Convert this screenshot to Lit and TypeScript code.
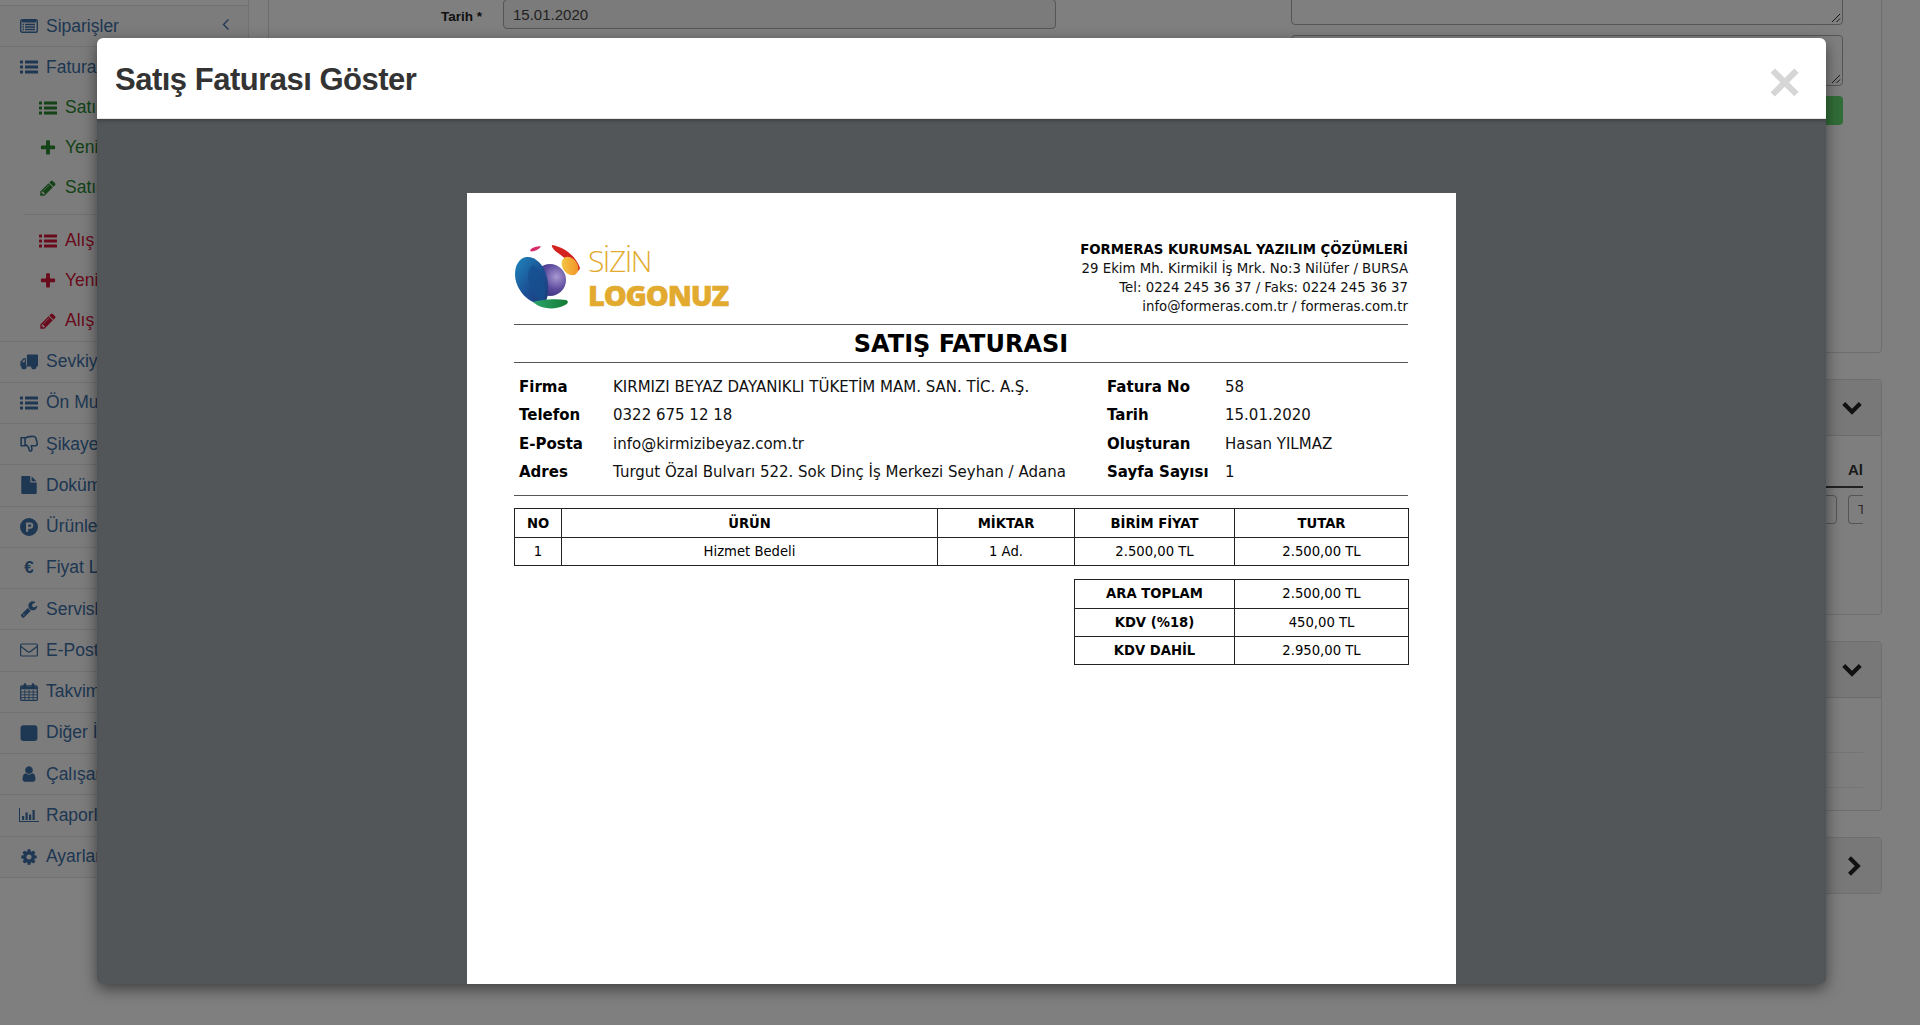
import { LitElement, html, css, svg } from "lit";
import { customElement } from "lit/decorators.js";

const FA: Record<string, string> = {
  plus: "M1600 736v192q0 40-28 68t-68 28h-416v416q0 40-28 68t-68 28h-192q-40 0-68-28t-28-68v-416h-416q-40 0-68-28t-28-68v-192q0-40 28-68t68-28h416v-416q0-40 28-68t68-28h192q40 0 68 28t28 68v416h416q40 0 68 28t28 68z",
  pencil: "M491 1536l91-91-235-235-91 91v107h128v128h107zm523-928q0-22-22-22-10 0-17 7l-542 542q-7 7-7 17 0 22 22 22 10 0 17-7l542-542q7-7 7-17zm-54-192l416 416-832 832h-416v-416zm683 96q0 53-37 90l-166 166-416-416 166-165q36-38 90-38 53 0 91 38l235 234q37 39 37 91z",
  cog: "M1152 896q0-106-75-181t-181-75-181 75-75 181 75 181 181 75 181-75 75-181zm512-109v222q0 12-8 23t-20 13l-185 28q-19 54-39 91 35 50 107 138 10 12 10 25t-9 23q-27 37-99 108t-94 71q-12 0-26-9l-138-108q-44 23-91 38-16 136-29 186-7 28-36 28h-222q-14 0-24.500-8.500t-11.500-21.500l-28-184q-49-16-90-37l-141 107q-10 9-25 9-14 0-25-11-126-114-165-168-7-10-7-23 0-12 8-23 15-21 51-66.500t54-70.500q-27-50-41-99l-183-27q-13-2-21-12.500t-8-23.500v-222q0-12 8-23t19-13l186-28q14-46 39-92-40-57-107-138-10-12-10-24 0-10 9-23 26-36 98.500-107.500t94.500-71.500q13 0 26 10l138 107q44-23 91-38 16-136 29-186 7-28 36-28h222q14 0 24.500 8.500t11.500 21.500l28 184q49 16 90 37l142-107q9-9 24-9 13 0 25 10 129 119 165 170 7 8 7 22 0 12-8 23-15 21-51 66.500t-54 70.500q26 50 41 98l183 28q13 2 21 12.500t8 23.500z",
  user: "M1536 1399q0 109-62.500 187t-150.500 78h-854q-88 0-150.500-78t-62.500-187q0-85 8.500-160.500t31.500-152 58.500-131 94-89 134.500-34.500q131 128 313 128t313-128q76 0 134.500 34.500t94 89 58.500 131 31.500 152 8.500 160.500zm-256-887q0 159-112.500 271.500t-271.500 112.500-271.500-112.500-112.500-271.500 112.500-271.500 271.500-112.500 271.500 112.500 112.500 271.500z",
  wrench: "M448 1472q0-26-19-45t-45-19-45 19-19 45 19 45 45 19 45-19 19-45zm644-420l-682 682q-37 37-90 37-52 0-91-37l-106-108q-38-36-38-90 0-53 38-91l681-681q39 98 114.500 173.500t173.500 114.500zm634-435q0 39-23 106-47 134-164.500 217.500t-258.500 83.500q-185 0-316.500-131.500t-131.500-316.500 131.500-316.500 316.500-131.500q58 0 121.500 16.500t107.500 46.500q16 11 16 28t-16 28l-293 169v224l193 107q5-3 79-48.500t135.500-81 70.500-35.500q15 0 23.500 10t8.500 25z",
  file: "M1152 512v-472q22 14 36 28l408 408q14 14 28 36h-472zm-128 32q0 40 28 68t68 28h544v1056q0 40-28 68t-68 28h-1344q-40 0-68-28t-28-68v-1600q0-40 28-68t68-28h800v544z",
};

const faIcon = (name: string) => svg`<svg class="ico" viewBox="0 0 1792 1792" fill="currentColor"><path d=${FA[name]} /></svg>`;

const icons: Record<string, () => unknown> = {
  plus: () => faIcon("plus"),
  pencil: () => faIcon("pencil"),
  cog: () => faIcon("cog"),
  user: () => faIcon("user"),
  wrench: () => faIcon("wrench"),
  file: () => faIcon("file"),
  list: () => svg`<svg class="ico" viewBox="0 0 18 14" fill="currentColor">
    <rect x="0" y="0.5" width="3" height="3" rx=".6"/><rect x="0" y="5.5" width="3" height="3" rx=".6"/><rect x="0" y="10.500" width="3" height="3" rx=".6"/>
    <rect x="5" y="0.5" width="13" height="3" rx=".5"/><rect x="5" y="5.500" width="13" height="3" rx=".5"/><rect x="5" y="10.500" width="13" height="3" rx=".5"/></svg>`,
  listalt: () => svg`<svg class="ico" viewBox="0 0 18 14" fill="none" stroke="currentColor">
    <rect x=".7" y=".7" width="16.600" height="12.600" rx="1.500" stroke-width="1.400"/>
    <path d="M2 1h14v2.500H2z" fill="currentColor" stroke="none"/>
    <path d="M5 5.500h10M5 8h10M5 10.500h10M2.500 5.500h1.500M2.500 8h1.500M2.500 10.500h1.500" stroke-width="1.300"/></svg>`,
  truck: () => svg`<svg class="ico" viewBox="0 0 17 14" fill="currentColor">
    <path d="M6.500 1c0-.5.4-1 1-1h8.500c.5 0 1 .5 1 1v9.500c0 .4-.3.700-.7.700H6.500z"/>
    <path d="M5.600 3.500H3.400L.4 6.700V11h5.200zM4.500 4.600v2.600H1.900l2-2.600z" fill-rule="evenodd"/>
    <circle cx="3.800" cy="11.400" r="2.500"/><circle cx="13" cy="11.400" r="2.500"/></svg>`,
  thumb: () => svg`<svg class="ico" viewBox="0 0 16 16" fill="none" stroke="currentColor" stroke-width="1.400" stroke-linejoin="round">
    <path d="M1 2.500h3.500v7H1zM4.500 3c2-1.800 4.500-2 8-1.700 1.200.2 1.700 1 1.800 2l1 4.200c.2 1.300-.6 2-1.700 2H10l.6 3c.1 1.300-.8 2-1.800 1.800-.7-.3-.8-2.200-1.300-3.300-.7-1.200-1.800-2-3-2.800"/></svg>`,
  ph: () => svg`<svg class="ico" viewBox="0 0 18 18" fill="currentColor"><path fill-rule="evenodd" d="M9 0a9 9 0 1 0 0 18A9 9 0 0 0 9 0zM6 4.500h4.200a3 3 0 0 1 0 6.200H8.200v3H6zM8.200 6.500v2.300h2a1.100 1.100 0 0 0 0-2.300z"/></svg>`,
  envelope: () => svg`<svg class="ico" viewBox="0 0 18 14" fill="none" stroke="currentColor" stroke-width="1.200"><rect x=".6" y="1" width="16.800" height="12" rx="1.300"/><path d="M1 3.500l6.500 5c1 .8 2 .8 3 0l6.500-5"/></svg>`,
  calendar: () => svg`<svg class="ico" viewBox="0 0 16 16" fill="none" stroke="currentColor"><rect x=".6" y="2.500" width="14.800" height="13" rx="1" stroke-width="1.100"/>
    <path d="M1 3h14v2.600H1z" fill="currentColor" stroke="none"/><rect x="3.500" y=".4" width="1.800" height="3.400" rx=".5" fill="currentColor" stroke-width=".4"/><rect x="10.700" y=".4" width="1.800" height="3.400" rx=".5" fill="currentColor" stroke-width=".4"/>
    <path d="M1 8h14M1 10.500h14M1 13h14M4.300 6v9M8 6v9M11.700 6v9" stroke-width=".8"/></svg>`,
  stop: () => svg`<svg class="ico" viewBox="0 0 16 16" fill="currentColor"><rect x=".5" y="1" width="15" height="14" rx="2.600"/></svg>`,
  chart: () => svg`<svg class="ico wide" viewBox="0 0 20 14" fill="currentColor"><path d="M0 0h1v13h19v1H0z"/><rect x="3" y="8" width="2.200" height="4"/><rect x="6.500" y="4.500" width="2.200" height="7.500"/><rect x="10" y="6.500" width="2.200" height="5.500"/><rect x="13.500" y="2" width="2.200" height="10"/></svg>`,
};

const chevron = (d: string) => svg`<svg class="chev" viewBox="0 0 16 16" fill="none" stroke="currentColor" stroke-width="2.800"><path d=${d} /></svg>`;

interface Item {
  icon: string;
  label: string;
  tone?: string;
}

const topItems: Item[] = [{ icon: "listalt", label: "Siparişler" }, { icon: "list", label: "Faturalar" }];
const salesItems: Item[] = [
  { icon: "list", label: "Satış Faturaları", tone: "green" },
  { icon: "plus", label: "Yeni Satış Faturası", tone: "green" },
  { icon: "pencil", label: "Satış Taslakları", tone: "green" },
];
const buyItems: Item[] = [
  { icon: "list", label: "Alış Faturaları", tone: "red" },
  { icon: "plus", label: "Yeni Alış Faturası", tone: "red" },
  { icon: "pencil", label: "Alış Taslakları", tone: "red" },
];
const lowerItems: Item[] = [
  { icon: "truck", label: "Sevkiyat" },
  { icon: "list", label: "Ön Muhasebe" },
  { icon: "thumb", label: "Şikayetler" },
  { icon: "file", label: "Dokümanlar" },
  { icon: "ph", label: "Ürünler" },
  { icon: "euro", label: "Fiyat Listeleri" },
  { icon: "wrench", label: "Servisler" },
  { icon: "envelope", label: "E-Posta" },
  { icon: "calendar", label: "Takvim" },
  { icon: "stop", label: "Diğer İşlemler" },
  { icon: "user", label: "Çalışanlar" },
  { icon: "chart", label: "Raporlar" },
  { icon: "cog", label: "Ayarlar" },
];

const resizer = svg`<svg class="grip" viewBox="0 0 10 10" fill="none" stroke="#333" stroke-width="1"><path d="M1 9l8-8M5.500 9L9 5.500" /></svg>`;

@customElement("app-root")
export class AppRoot extends LitElement {
  static styles = css`
    :host {
      display: block;
      position: relative;
      height: 1025px;
      overflow: hidden;
      background: #fff;
      font-family: "Liberation Sans", Arial, sans-serif;
    }
    .page {
      display: flex;
      height: 1025px;
    }
    .sidebar {
      width: 248px;
      flex: none;
      align-self: flex-start;
      padding-top: 5px;
      border-right: 1px solid #e4e4e4;
    }
    .row {
      display: flex;
      align-items: center;
      height: 41.25px;
      padding-left: 20px;
      gap: 8px;
      font-size: 17.5px;
      color: #3c6ea5;
      border-top: 1px solid #e2e2e2;
      background: #f8f8f8;
      box-sizing: border-box;
      position: relative;
      white-space: nowrap;
    }
    .row.last {
      border-bottom: 1px solid #e2e2e2;
      height: 42px;
    }
    .group {
      background: #f8f8f8;
    }
    .sub {
      display: flex;
      align-items: center;
      height: 40px;
      padding-left: 39px;
      gap: 8px;
      font-size: 17.5px;
      white-space: nowrap;
    }
    .green { color: #27862f; }
    .red { color: #d4143a; }
    .divider {
      height: 1px;
      margin: 6px 0 6px 24px;
      background: #e2e2e2;
    }
    .ico {
      width: 18px;
      height: 18px;
      flex: none;
    }
    .ico.wide { width: 20px; margin-left: -1px; margin-right: -1px; }
    .euro {
      width: 18px;
      flex: none;
      text-align: center;
      font-weight: 700;
      font-size: 17px;
    }
    .back {
      position: absolute;
      left: 221px;
      top: 12px;
      width: 10px;
      height: 13px;
    }
    .content {
      margin-left: 19px;
      width: 1614px;
      flex: none;
      display: flex;
      flex-direction: column;
    }
    .panel {
      border: 1px solid #dcdcdc;
      border-radius: 4px;
      background: #fdfdfd;
      box-sizing: border-box;
    }
    .form {
      height: 353px;
      border-top: 0;
      border-radius: 0 0 4px 4px;
      background: #ffffff;
      display: flex;
      padding-right: 38px;
    }
    .form-left {
      width: 1022px;
      flex: none;
      box-sizing: border-box;
      display: flex;
      padding-left: 172px;
      gap: 21px;
      color: #222;
    }
    .form-left label {
      font-size: 13.5px;
      font-weight: 700;
      margin-top: 9px;
      white-space: nowrap;
    }
    .date {
      width: 553px;
      height: 30px;
      margin-top: -1px;
      border: 1px solid #aaa;
      border-radius: 4px;
      box-sizing: border-box;
      padding: 6px 9px;
      font-size: 15px;
      color: #444;
      background: #f6f6f6;
    }
    .form-right {
      flex: 1;
      display: flex;
      flex-direction: column;
    }
    .area {
      position: relative;
      border: 1px solid #aaa;
      border-radius: 4px;
      box-sizing: border-box;
      height: 51px;
      margin-bottom: 10px;
    }
    .area.first {
      height: 35px;
      margin-top: -10px;
    }
    .grip {
      position: absolute;
      right: 1px;
      bottom: 1px;
      width: 10px;
      height: 10px;
    }
    .save {
      align-self: flex-end;
      width: 120px;
      height: 29px;
      background: #62dc70;
      border-radius: 4px;
    }
    .card {
      margin-top: 26px;
      overflow: hidden;
    }
    .card-head {
      display: flex;
      align-items: center;
      justify-content: flex-end;
      padding-right: 17px;
      background: #f0f0f0;
      border-bottom: 1px solid #d8d8d8;
      color: #222;
    }
    .chev {
      width: 24px;
      height: 24px;
    }
    .tall { height: 55px; }
    .card.one { height: 236px; }
    .card.two { height: 170px; }
    .card.three { height: 57px; }
    .card.three .card-head { height: 55px; border: 0; padding-right: 15px; }
    .tabs {
      padding: 25px 18px 0 0;
    }
    .tab-title {
      text-align: right;
      font-size: 15px;
      font-weight: 700;
      color: #333;
      height: 25px;
      border-bottom: 2px solid #444;
    }
    .boxes {
      display: flex;
      gap: 11px;
      margin-top: 7px;
      justify-content: flex-end;
    }
    .box {
      width: 60px;
      height: 29px;
      flex: none;
      border: 1px solid #aaa;
      border-radius: 4px;
      box-sizing: border-box;
    }
    .box.clip {
      width: 15px;
      border-right: 0;
      border-radius: 4px 0 0 4px;
      font-size: 13px;
      color: #555;
      padding: 6px 0 0 9px;
      overflow: hidden;
    }
    .rules {
      margin: 20px 18px 0 0;
    }
    .rules div {
      height: 34px;
      border-bottom: 1px solid #eaeaea;
    }
    .scrim {
      position: absolute;
      inset: 0;
      background: rgba(0, 0, 0, 0.5);
    }
    .modal {
      position: absolute;
      left: 97px;
      top: 38px;
      width: 1729px;
      height: 946px;
      border-radius: 6px;
      overflow: hidden;
      box-shadow: 0 5px 15px rgba(0, 0, 0, 0.5);
      display: flex;
      flex-direction: column;
      background: #525659;
    }
    .modal-head {
      height: 81px;
      flex: none;
      background: #fff;
      border-bottom: 1px solid #e5e5e5;
      box-sizing: border-box;
      padding: 0 18px;
      display: flex;
      align-items: center;
      justify-content: space-between;
      color: #333;
    }
    h3 {
      margin: 4px 0 0;
      font-size: 31px;
      font-weight: 700;
      letter-spacing: -0.5px;
      line-height: 1.1;
    }
    .close {
      font-size: 56px;
      font-weight: 700;
      line-height: 1;
      color: #d6d6d6;
      margin: 8px 7px 0 0;
    }
    .modal-body {
      flex: 1;
      display: flex;
      justify-content: center;
      padding-top: 74px;
      overflow: hidden;
      box-shadow: inset 0 4px 4px -3px rgba(0, 0, 0, 0.35);
    }
    .sheet {
      width: 989px;
      height: 791px;
      flex: none;
      background: #fff;
      box-sizing: border-box;
      padding: 47px 48px 0 47px;
      color: #000;
      font-family: "DejaVu Sans", sans-serif;
    }
    .sheet-head {
      display: flex;
      justify-content: space-between;
      height: 86px;
      border-bottom: 1px solid #555;
      box-sizing: border-box;
      margin-top: -1px;
      padding-top: 1px;
    }
    .logo {
      display: flex;
      align-items: flex-start;
      margin-top: 2px;
    }
    .logo svg {
      width: 68px;
      height: 68px;
      flex: none;
    }
    .logo-text {
      margin-left: 6px;
      color: #e2aa2e;
      font-family: "Open Sans", sans-serif;
      display: flex;
      flex-direction: column;
    }
    .sizin {
      font-size: 30px;
      font-weight: 300;
      line-height: 32px;
      letter-spacing: -1.5px;
      height: 35px;
      margin-top: 3px;
    }
    .logonuz {
      font-size: 29px;
      font-weight: 800;
      line-height: 30px;
      letter-spacing: -1.2px;
      -webkit-text-stroke: 0.5px #e2aa2e;
    }
    .company {
      text-align: right;
      font-size: 13.3px;
      line-height: 19px;
      color: #111;
    }
    .company b {
      color: #000;
    }
    h1 {
      margin: 0;
      height: 38px;
      line-height: 38px;
      text-align: center;
      font-size: 24px;
      font-weight: 700;
      border-bottom: 1px solid #555;
      box-sizing: border-box;
    }
    .info {
      display: grid;
      grid-template-columns: 94px 494px 118px 1fr;
      grid-auto-rows: 28.33px;
      align-items: center;
      margin-top: 10px;
      padding: 0 0 9px 5px;
      border-bottom: 1px solid #555;
      font-size: 15px;
      color: #111;
      white-space: nowrap;
    }
    .info b {
      color: #000;
    }
    table {
      border-collapse: collapse;
      table-layout: fixed;
      font-size: 13.2px;
      text-align: center;
    }
    td, th {
      border: 1px solid #222;
      padding: 0;
      height: 27.5px;
    }
    .items {
      width: 895px;
      margin-top: 12px;
    }
    .totals {
      width: 335px;
      margin: 13px -1px 0 auto;
    }
    .totals td, .totals th {
      height: 27.2px;
    }
    .c-no { width: 47px; }
    .c-name { width: 376px; }
    .c-qty { width: 137px; }
    .c-price { width: 160px; }
    .c-total { width: 174px; }
  `;

  navRow(item: Item, cls = "row") {
    return html`<div class=${cls}>
      ${item.icon === "euro" ? html`<span class="euro">€</span>` : icons[item.icon]()}
      <span>${item.label}</span>
    </div>`;
  }

  subRow(item: Item) {
    return html`<div class="sub ${item.tone}">${icons[item.icon]()}<span>${item.label}</span></div>`;
  }

  logo() {
    return svg`<svg viewBox="0 0 68 68">
      <defs>
        <linearGradient id="blue" x1="0" y1="0" x2="1" y2="1"><stop offset="0" stop-color="#1f86bd"/><stop offset=".55" stop-color="#1b4f93"/><stop offset="1" stop-color="#1f3a78"/></linearGradient>
        <radialGradient id="violet" cx=".7" cy=".4" r=".8"><stop offset="0" stop-color="#a999d2"/><stop offset=".5" stop-color="#5b4a9c"/><stop offset="1" stop-color="#2c2a72"/></radialGradient>
        <linearGradient id="sun" x1="0" y1="0" x2="1" y2="1"><stop offset="0" stop-color="#f6d04a"/><stop offset="1" stop-color="#ef8a22"/></linearGradient>
        <linearGradient id="leaf" x1="0" y1="0" x2="1" y2="0"><stop offset="0" stop-color="#2ba56a"/><stop offset="1" stop-color="#157a35"/></linearGradient>
      </defs>
      <path d="M17 7c3-2 7-3 10-2.500-2 3-6 4.500-9.500 5-1.500.2-1.500-1.500-.5-2.500z" fill="#d72b6c"/>
      <path d="M38 3C50 5 62 14 66 26 65 30 62 30 60 27 58 22 50 15 44 11 41 9 37 5 38 3z" fill="#d3221f"/>
      <ellipse cx="56" cy="24" rx="7.500" ry="10" transform="rotate(-35 56 24)" fill="url(#sun)"/>
      <circle cx="36" cy="38" r="16" fill="url(#violet)"/>
      <path d="M12 15c9-1 17 7 20 17 3 10 3 20 0 27-1 2-3 3-6 3C12 60 1 46 1 32 1 24 5 16 12 15z" fill="url(#blue)"/>
      <path d="M19 23c7 4 12 15 12 25 0 6-1 9-3 11-8-5-14-14-14-24 0-6 2-10 5-12z" fill="#174f8f" opacity=".8"/>
      <path d="M19 60c6-2 21-4 33-2 3 1 2 4-1 5-9 5-23 5-32-3z" fill="url(#leaf)"/>
    </svg>`;
  }

  render() {
    return html`
      <div class="page">
        <nav class="sidebar">
          <div class="row">
            ${icons.listalt()}<span>${topItems[0].label}</span>
            <svg class="back" viewBox="0 0 10 13" fill="none" stroke="currentColor" stroke-width="1.300"><path d="M7.500 1.500L2.500 6.500l5 5" /></svg>
          </div>
          <div class="group">
            ${this.navRow(topItems[1])}
            ${salesItems.map((i) => this.subRow(i))}
            <div class="divider"></div>
            ${buyItems.map((i) => this.subRow(i))}
          </div>
          ${lowerItems.map((i, n) => this.navRow(i, n === lowerItems.length - 1 ? "row last" : "row"))}
        </nav>
        <main class="content">
          <section class="panel form">
            <div class="form-left">
              <label>Tarih *</label>
              <div class="date">15.01.2020</div>
            </div>
            <div class="form-right">
              <div class="area first">${resizer}</div>
              <div class="area">${resizer}</div>
              <div class="save"></div>
            </div>
          </section>
          <section class="panel card one">
            <div class="card-head tall">${chevron("M2.500 5l5.500 5.500L13.500 5")}</div>
            <div class="tabs">
              <div class="tab-title">Al</div>
              <div class="boxes"><div class="box"></div><div class="box clip">T</div></div>
            </div>
          </section>
          <section class="panel card two">
            <div class="card-head tall">${chevron("M2.500 5l5.500 5.500L13.500 5")}</div>
            <div class="rules"><div></div><div></div></div>
          </section>
          <section class="panel card three">
            <div class="card-head">${chevron("M5 2.500L10.500 8 5 13.500")}</div>
          </section>
        </main>
      </div>
      <div class="scrim"></div>
      <div class="modal">
        <header class="modal-head">
          <h3>Satış Faturası Göster</h3>
          <span class="close">×</span>
        </header>
        <div class="modal-body">
          <article class="sheet">
            <div class="sheet-head">
              <div class="logo">
                ${this.logo()}
                <div class="logo-text"><span class="sizin">SİZİN</span><span class="logonuz">LOGONUZ</span></div>
              </div>
              <div class="company">
                <b>FORMERAS KURUMSAL YAZILIM ÇÖZÜMLERİ</b><br />
                29 Ekim Mh. Kirmikil İş Mrk. No:3 Nilüfer / BURSA<br />
                Tel: 0224 245 36 37 / Faks: 0224 245 36 37<br />
                info@formeras.com.tr / formeras.com.tr
              </div>
            </div>
            <h1>SATIŞ FATURASI</h1>
            <div class="info">
              <b>Firma</b><span>KIRMIZI BEYAZ DAYANIKLI TÜKETİM MAM. SAN. TİC. A.Ş.</span><b>Fatura No</b><span>58</span>
              <b>Telefon</b><span>0322 675 12 18</span><b>Tarih</b><span>15.01.2020</span>
              <b>E-Posta</b><span>info@kirmizibeyaz.com.tr</span><b>Oluşturan</b><span>Hasan YILMAZ</span>
              <b>Adres</b><span>Turgut Özal Bulvarı 522. Sok Dinç İş Merkezi Seyhan / Adana</span><b>Sayfa Sayısı</b><span>1</span>
            </div>
            <table class="items">
              <colgroup><col class="c-no" /><col class="c-name" /><col class="c-qty" /><col class="c-price" /><col class="c-total" /></colgroup>
              <tr><th>NO</th><th>ÜRÜN</th><th>MİKTAR</th><th>BİRİM FİYAT</th><th>TUTAR</th></tr>
              <tr><td>1</td><td>Hizmet Bedeli</td><td>1 Ad.</td><td>2.500,00 TL</td><td>2.500,00 TL</td></tr>
            </table>
            <table class="totals">
              <colgroup><col class="c-price" /><col class="c-total" /></colgroup>
              <tr><th>ARA TOPLAM</th><td>2.500,00 TL</td></tr>
              <tr><th>KDV (%18)</th><td>450,00 TL</td></tr>
              <tr><th>KDV DAHİL</th><td>2.950,00 TL</td></tr>
            </table>
          </article>
        </div>
      </div>
    `;
  }
}
